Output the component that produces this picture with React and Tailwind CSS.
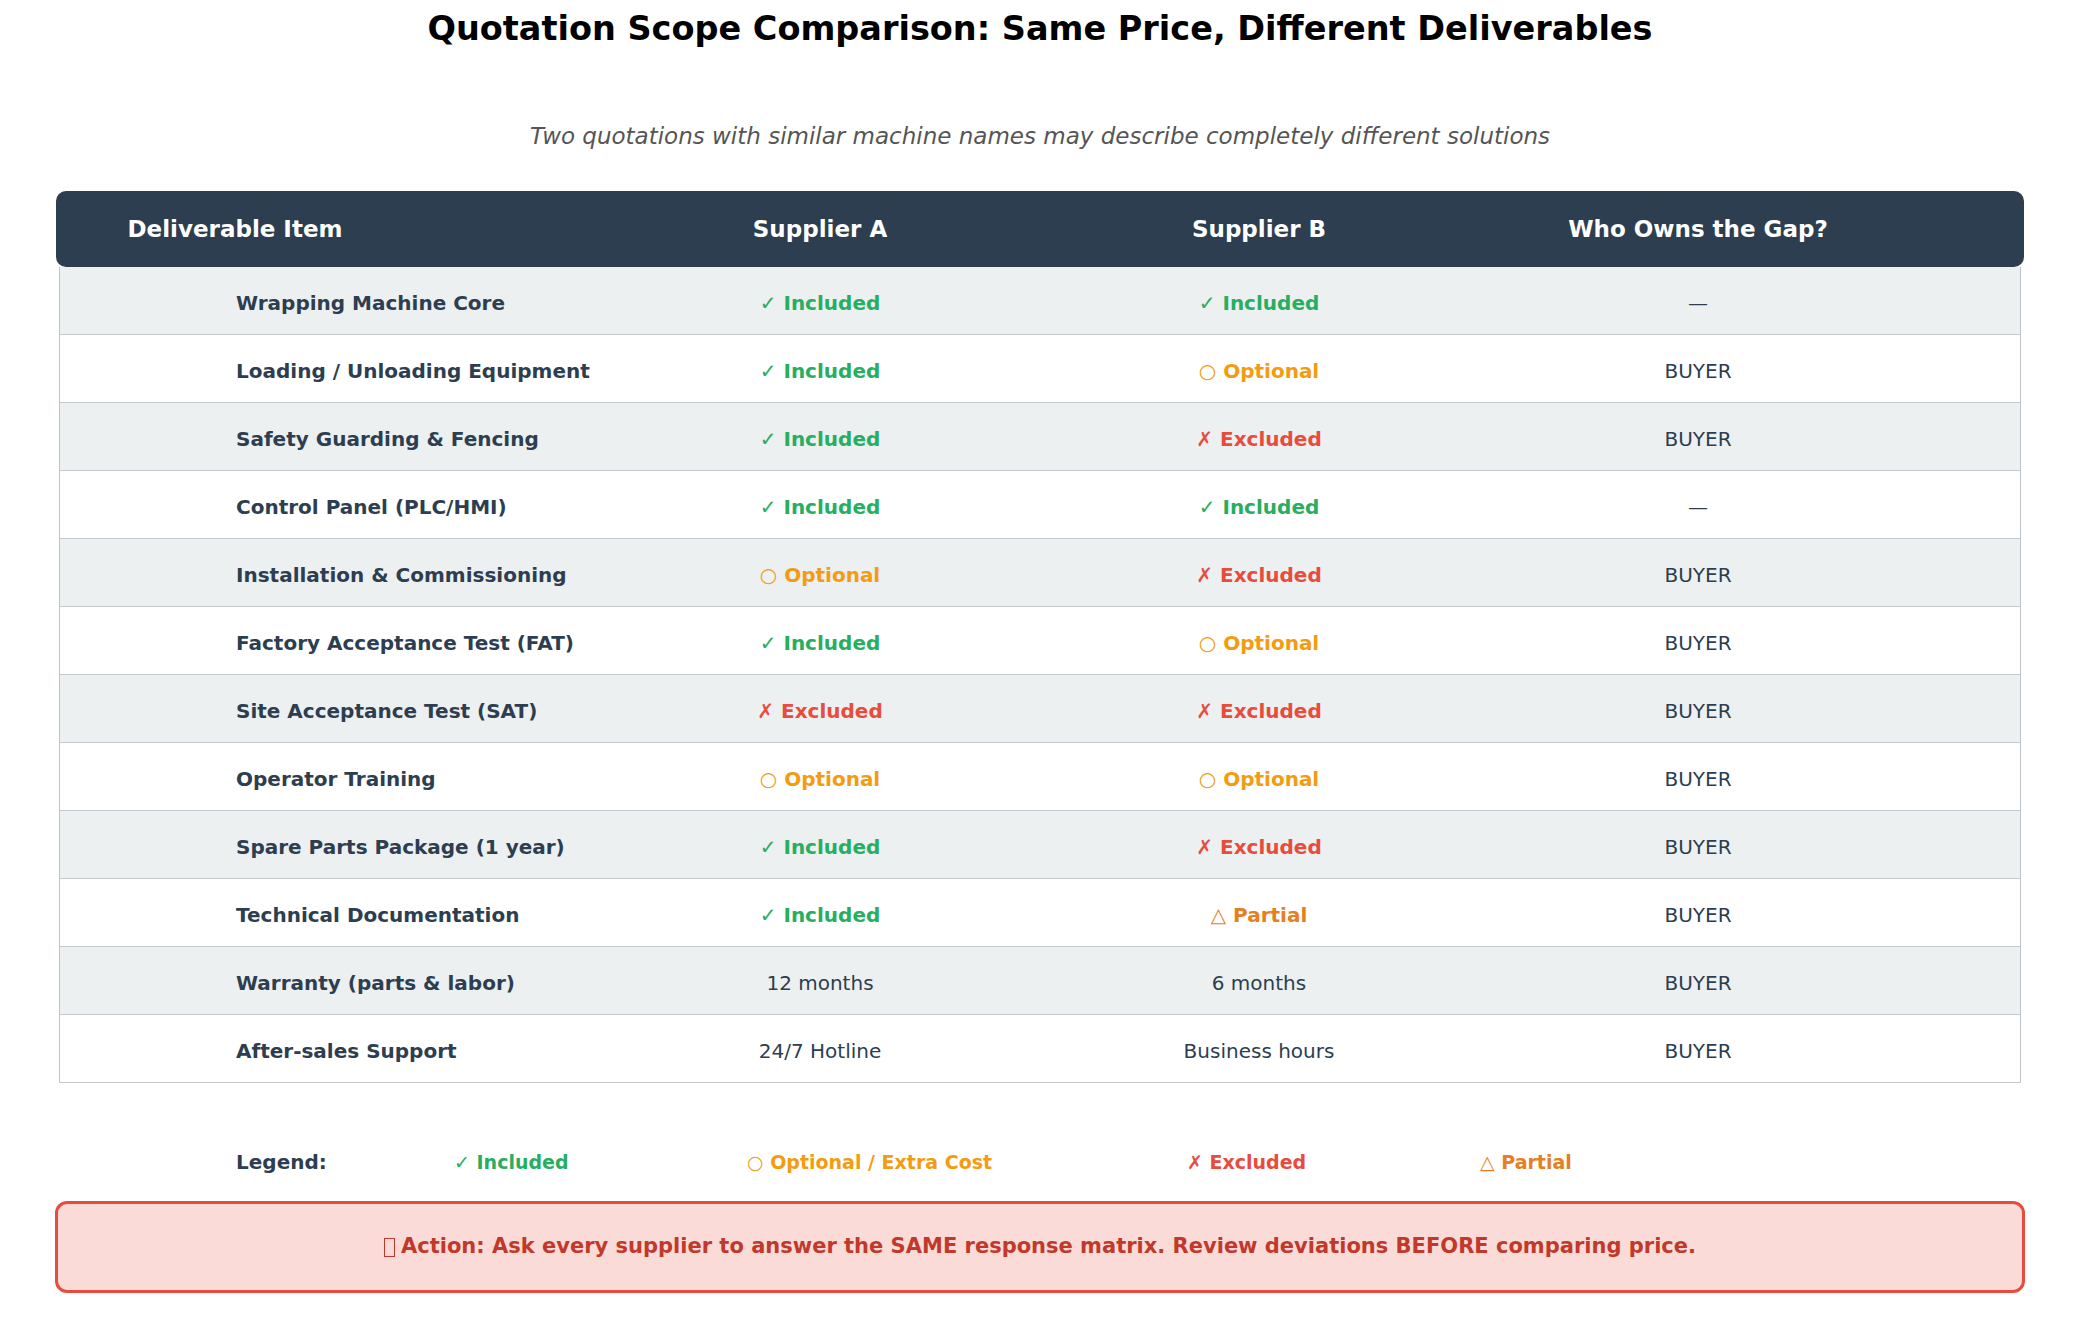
import React from 'react'

const GREEN = 'text-[#27ae60]'
const ORANGE = 'text-[#f39c12]'
const RED = 'text-[#e74c3c]'
const DARK_ORANGE = 'text-[#e67e22]'

const status = {
  inc: { label: '✓ Included', cls: GREEN },
  opt: { label: '○ Optional', cls: ORANGE },
  exc: { label: '✗ Excluded', cls: RED },
  par: { label: '△ Partial', cls: DARK_ORANGE },
}

const rows = [
  ['Wrapping Machine Core', 'inc', 'inc', '—'],
  ['Loading / Unloading Equipment', 'inc', 'opt', 'BUYER'],
  ['Safety Guarding & Fencing', 'inc', 'exc', 'BUYER'],
  ['Control Panel (PLC/HMI)', 'inc', 'inc', '—'],
  ['Installation & Commissioning', 'opt', 'exc', 'BUYER'],
  ['Factory Acceptance Test (FAT)', 'inc', 'opt', 'BUYER'],
  ['Site Acceptance Test (SAT)', 'exc', 'exc', 'BUYER'],
  ['Operator Training', 'opt', 'opt', 'BUYER'],
  ['Spare Parts Package (1 year)', 'inc', 'exc', 'BUYER'],
  ['Technical Documentation', 'inc', 'par', 'BUYER'],
  ['Warranty (parts & labor)', '12 months', '6 months', 'BUYER'],
  ['After-sales Support', '24/7 Hotline', 'Business hours', 'BUYER'],
]

function Cell({ value }) {
  const s = status[value]
  if (s) return <span className={`font-bold ${s.cls}`}>{s.label}</span>
  return <span className="text-[#2c3e50]">{value}</span>
}

function App() {
  return (
    <div className="w-[2080px] h-[1332px] bg-white font-['DejaVu_Sans',sans-serif] overflow-hidden">
      <h1 className="pt-[12px] text-center text-[33.5px] leading-[34px] font-bold text-black">
        Quotation Scope Comparison: Same Price, Different Deliverables
      </h1>
      <p className="mt-[79px] text-center italic text-[23px] leading-[23px] text-[#555555]">
        Two quotations with similar machine names may describe completely different solutions
      </p>

      <div className="mt-[43px] ml-[56px] w-[1968px]">
        <div className="h-[76px] rounded-[10px] bg-[#2c3e50] grid grid-cols-[546px_436px_442px_436px_1fr] items-center text-white font-bold text-[23px]">
          <div><span className="block w-[358px] text-center">Deliverable Item</span></div>
          <div className="text-center">Supplier A</div>
          <div className="text-center">Supplier B</div>
          <div className="text-center">Who Owns the Gap?</div>
          <div />
        </div>
        <div className="mx-[3px] border-x border-[#bdc3c7]">
          {rows.map((r, i) => (
            <div
              key={r[0]}
              className={`h-[68px] pt-[5px] border-b border-[#c4c9cc] grid grid-cols-[542px_436px_442px_436px_1fr] items-center text-[20px] ${i % 2 === 0 ? 'bg-[#ecf0f1]' : 'bg-white'}`}
            >
              <div className="pl-[176px] font-bold text-[#2c3e50] whitespace-nowrap">{r[0]}</div>
              <div className="text-center"><Cell value={r[1]} /></div>
              <div className="text-center"><Cell value={r[2]} /></div>
              <div className="text-center text-[#2c3e50]">{r[3]}</div>
              <div />
            </div>
          ))}
        </div>
      </div>

      <div className="mt-[67px] pl-[236px] flex items-baseline leading-[24px] whitespace-nowrap">
        <span className="w-[218px] text-[20px] font-bold text-[#2c3e50]">Legend:</span>
        <span className={`w-[293px] text-[19px] font-bold ${GREEN}`}>✓ Included</span>
        <span className={`w-[440px] text-[19px] font-bold ${ORANGE}`}>○ Optional / Extra Cost</span>
        <span className={`w-[293px] text-[19px] font-bold ${RED}`}>✗ Excluded</span>
        <span className={`text-[19px] font-bold ${DARK_ORANGE}`}>△ Partial</span>
      </div>

      <div className="mt-[27px] ml-[55px] w-[1970px] h-[92px] border-[3px] border-[#e74c3c] rounded-[12px] bg-[#fadbd8] flex items-center justify-center text-[21px] font-bold text-[#c0392b] whitespace-nowrap">
        <span className="inline-block w-[11px] h-[19px] border-[1.5px] border-[#c0392b] mr-[6px]" />
        Action: Ask every supplier to answer the SAME response matrix. Review deviations BEFORE comparing price.
      </div>
    </div>
  )
}

export default App
